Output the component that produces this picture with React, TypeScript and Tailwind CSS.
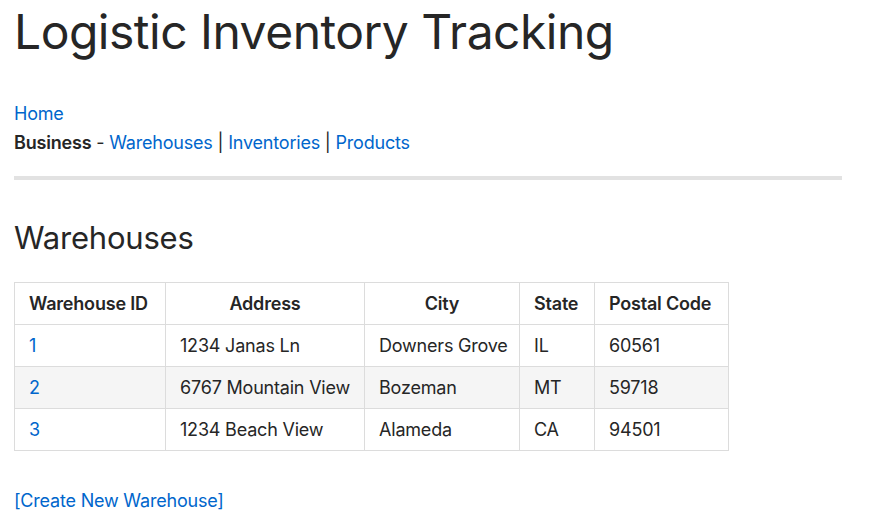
import React from "react";

const rows = [
  { id: "1", address: "1234 Janas Ln", city: "Downers Grove", state: "IL", zip: "60561" },
  { id: "2", address: "6767 Mountain View", city: "Bozeman", state: "MT", zip: "59718" },
  { id: "3", address: "1234 Beach View", city: "Alameda", state: "CA", zip: "94501" },
];

export default function App() {
  return (
    <div className="min-h-[530px] bg-white px-[14px] text-[#262626] font-['Inter',sans-serif] text-[18px] tracking-[-0.2px]">
      <h1 className="text-[48px] leading-[64px] font-normal tracking-[-0.5px]">Logistic Inventory Tracking</h1>
      <div className="mt-[35px] leading-[29px]">
        <div>
          <a className="text-[#0066cc]">Home</a>
        </div>
        <div>
          <span className="font-semibold">Business</span> -{" "}
          <a className="text-[#0066cc]">Warehouses</a> |{" "}
          <a className="text-[#0066cc]">Inventories</a> |{" "}
          <a className="text-[#0066cc]">Products</a>
        </div>
      </div>
      <div className="mt-[19px] h-[4px] w-[828px] bg-[#e2e2e2]" />
      <h2 className="mt-[38px] text-[31px] leading-[40px] font-normal">Warehouses</h2>
      <table className="mt-[24px] border-collapse whitespace-nowrap table-fixed w-[714px]">
        <colgroup>
          <col className="w-[151px]" />
          <col className="w-[199px]" />
          <col className="w-[155px]" />
          <col className="w-[75px]" />
          <col className="w-[134px]" />
        </colgroup>
        <thead>
          <tr className="h-[42px]">
            <th className="border border-[#dcdcdc] px-[14px] py-0 font-semibold text-left">Warehouse ID</th>
            <th className="border border-[#dcdcdc] px-[14px] py-0 font-semibold">Address</th>
            <th className="border border-[#dcdcdc] px-[14px] py-0 font-semibold">City</th>
            <th className="border border-[#dcdcdc] px-[14px] py-0 font-semibold text-left">State</th>
            <th className="border border-[#dcdcdc] px-[14px] py-0 font-semibold text-left">Postal Code</th>
          </tr>
        </thead>
        <tbody>
          {rows.map((r, i) => (
            <tr key={r.id} className={`h-[42px] ${i % 2 === 1 ? "bg-[#f5f5f5]" : "bg-white"}`}>
              <td className="border border-[#dcdcdc] px-[14px] py-0">
                <a className="text-[#0066cc]">{r.id}</a>
              </td>
              <td className="border border-[#dcdcdc] px-[14px] py-0">{r.address}</td>
              <td className="border border-[#dcdcdc] px-[14px] py-0">{r.city}</td>
              <td className="border border-[#dcdcdc] px-[14px] py-0">{r.state}</td>
              <td className="border border-[#dcdcdc] px-[14px] py-0">{r.zip}</td>
            </tr>
          ))}
        </tbody>
      </table>
      <div className="mt-[35px] leading-[29px]">
        <a className="text-[#0066cc]">[Create New Warehouse]</a>
      </div>
    </div>
  );
}
